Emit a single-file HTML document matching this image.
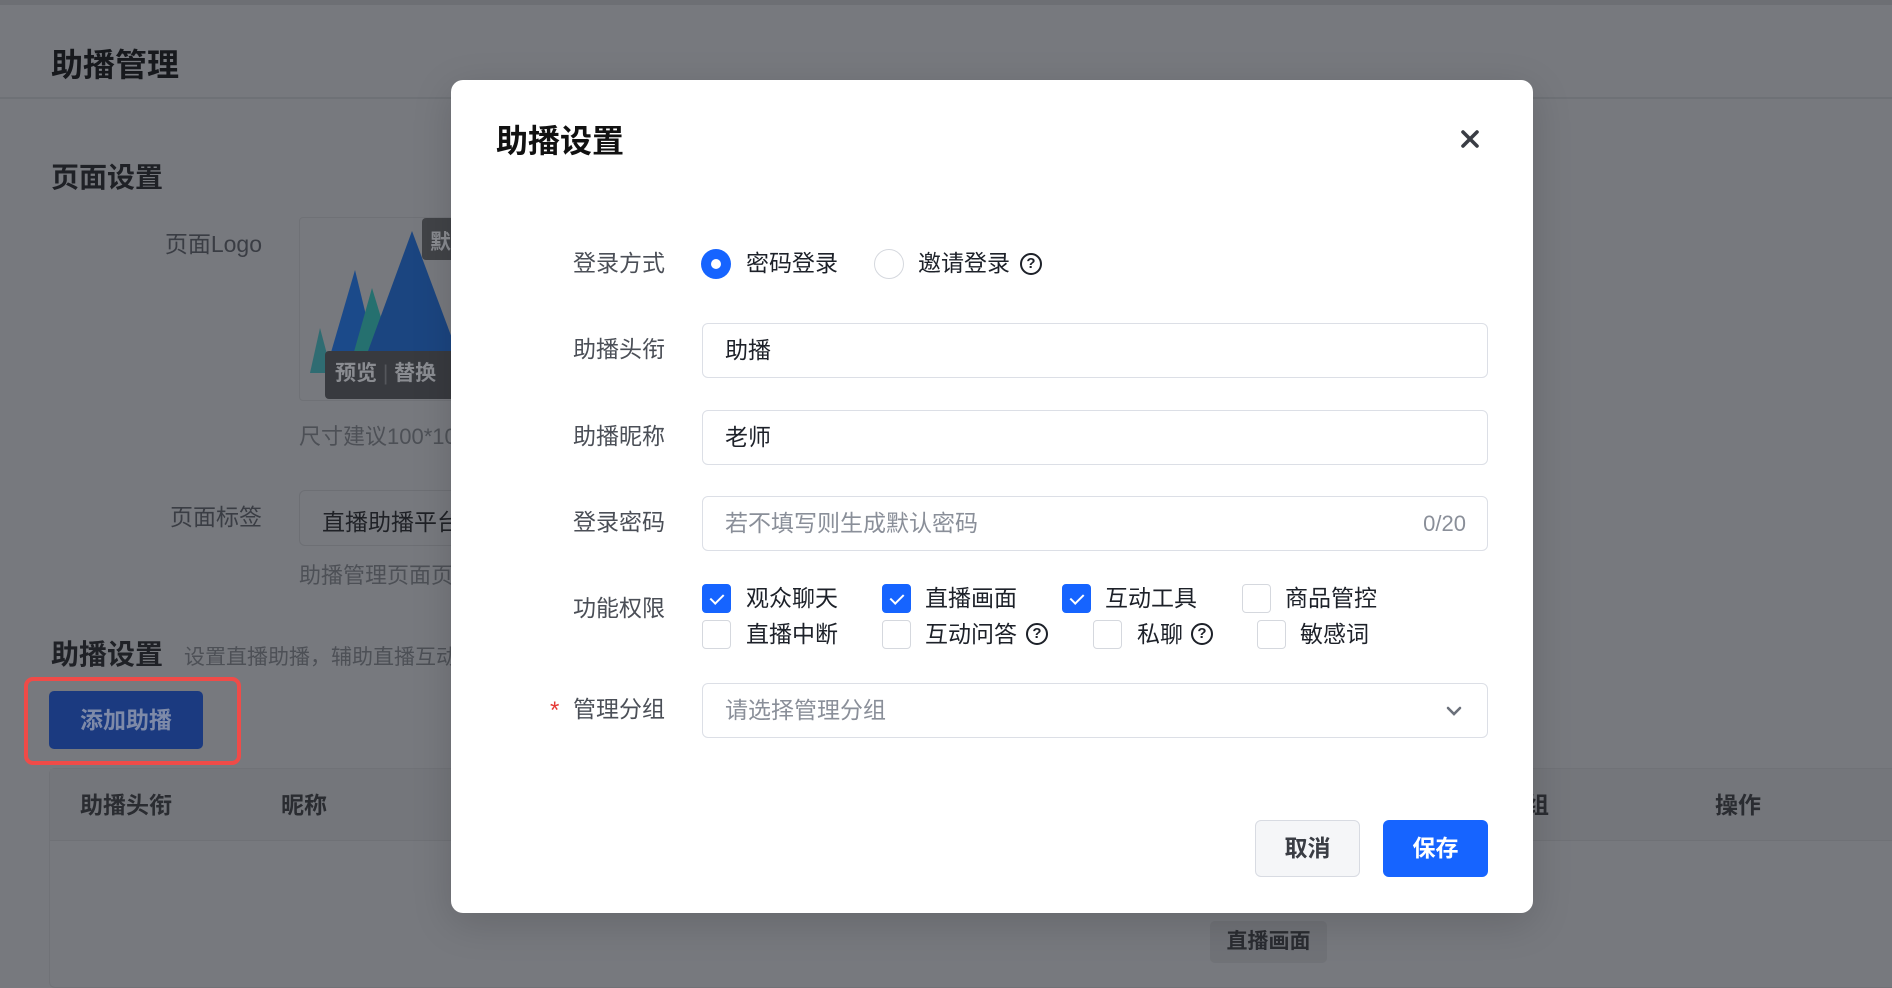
<!DOCTYPE html>
<html><head><meta charset="utf-8"><style>
*{box-sizing:border-box;margin:0;padding:0}
body{width:1892px;height:968px;overflow:hidden;background:#77797e;font-family:"Liberation Sans","Noto Sans CJK SC",sans-serif;position:relative;color:#1f2126}
.a{position:absolute;white-space:nowrap}
.lbl{font-size:23px;color:#3a3d44;line-height:1}
.m{position:absolute;left:451px;top:80px;width:1082px;height:833px;background:#fff;border-radius:12px;box-shadow:0 10px 40px rgba(0,0,0,.15)}
.ml{position:absolute;right:1227px;font-size:23px;color:#4b4f57;line-height:1;white-space:nowrap}
.inp{position:absolute;left:702px;width:786px;height:55px;border:1px solid #dcdfe6;border-radius:6px;font-size:23px;color:#1d2129;padding-left:22px;line-height:53px}
.cb{position:absolute;width:29px;height:29px;border:1px solid #d5d8de;border-radius:4px;background:#fff}
.cb.on{background:#1664ff;border-color:#1664ff}
.cb.on::after{content:"";position:absolute;left:10px;top:6px;width:6px;height:11px;border:solid #fff;border-width:0 2px 2px 0;transform:rotate(45deg)}
.ct{position:absolute;font-size:23px;color:#1d2129;line-height:1;white-space:nowrap}
.q{position:absolute;width:22px;height:22px;border:2px solid #1d2129;border-radius:50%;font-size:15px;line-height:18px;text-align:center;font-weight:bold;color:#1d2129}
</style></head><body>
<div class="a" style="left:0;top:0;width:1892px;height:5px;background:#6d6f74"></div>
<div class="a" style="left:0;top:97px;width:1892px;height:2px;background:#6e7176"></div>
<div class="a" style="left:51px;top:40px;font-size:32px;font-weight:bold;color:#17191d">助播管理</div>
<div class="a" style="left:51px;top:156px;font-size:28px;font-weight:bold;color:#1f2126">页面设置</div>
<div class="a lbl" style="right:1630px;top:233px">页面Logo</div>
<div class="a" style="left:299px;top:217px;width:190px;height:184px;border:1px solid #6f7176;border-radius:4px;overflow:hidden">
<svg width="190" height="184" style="position:absolute;left:0;top:0">
<polygon points="10,155 20,110 32,155" fill="#2f6c72"/>
<polygon points="25,155 55,52 80,155" fill="#1b4a8a"/>
<polygon points="48,155 72,70 98,155" fill="#25706f"/>
<polygon points="60,155 112,13 165,155" fill="#1b4580"/>
</svg>
<div class="a" style="left:25px;top:133px;width:170px;height:48px;background:#383a3f;border-radius:4px;color:#8a8c91;font-size:21px;font-weight:bold;line-height:46px;padding-left:10px">预览 <span style="color:#55575c;font-weight:normal">|</span> 替换</div>
<div class="a" style="left:122px;top:0;width:60px;height:42px;background:#414347;border-radius:4px;color:#8a8c91;font-size:21px;font-weight:bold;padding:8px">默认</div>
</div>
<div class="a" style="left:299px;top:419px;font-size:22px;color:#4d5056">尺寸建议100*100</div>
<div class="a lbl" style="right:1630px;top:506px">页面标签</div>
<div class="a" style="left:299px;top:490px;width:200px;height:56px;border:1px solid #6d6f74;border-radius:6px;font-size:23px;color:#1f2126;padding:12px 22px">直播助播平台</div>
<div class="a" style="left:299px;top:558px;font-size:22px;color:#4d5056">助播管理页面页面标签</div>
<div class="a" style="left:51px;top:633px;font-size:28px;font-weight:bold;color:#1f2126">助播设置</div>
<div class="a" style="left:184px;top:641px;font-size:21px;color:#4d5056">设置直播助播，辅助直播互动</div>
<div class="a" style="left:24px;top:677px;width:217px;height:88px;border:4px solid #f04b48;border-radius:9px"></div>
<div class="a" style="left:49px;top:691px;width:154px;height:58px;background:#1b3a80;border-radius:5px;color:#7e8aa8;font-size:23px;font-weight:bold;text-align:center;line-height:58px">添加助播</div>
<div class="a" style="left:49px;top:768px;width:1860px;height:220px;border:1px solid #707277;border-radius:6px"></div>
<div class="a" style="left:50px;top:769px;width:1850px;height:72px;background:#74767b;border-bottom:1px solid #6f7176"></div>
<div class="a" style="left:80px;top:786px;font-size:23px;font-weight:bold;color:#2a2c31">助播头衔</div>
<div class="a" style="left:281px;top:786px;font-size:23px;font-weight:bold;color:#2a2c31">昵称</div>
<div class="a" style="left:1503px;top:786px;font-size:23px;font-weight:bold;color:#2a2c31">分组</div>
<div class="a" style="left:1715px;top:786px;font-size:23px;font-weight:bold;color:#2a2c31">操作</div>
<div class="a" style="left:1210px;top:921px;width:117px;height:42px;background:#707277;border-radius:5px;font-size:21px;font-weight:bold;color:#2a2c31;text-align:center;line-height:42px">直播画面</div>

<div class="m"></div>
<div class="a" style="left:496px;top:116px;font-size:32px;font-weight:bold;color:#111">助播设置</div>
<svg class="a" style="left:1461px;top:130px" width="18" height="18"><path d="M2 2L16 16M16 2L2 16" stroke="#3a3d44" stroke-width="3.6" stroke-linecap="round"/></svg>

<div class="ml" style="top:252px">登录方式</div>
<div class="a" style="left:701px;top:249px;width:30px;height:30px;border-radius:50%;background:#1664ff"></div>
<div class="a" style="left:711px;top:259px;width:10px;height:10px;border-radius:50%;background:#fff"></div>
<div class="ct" style="left:746px;top:252px">密码登录</div>
<div class="a" style="left:874px;top:249px;width:30px;height:30px;border-radius:50%;border:1px solid #d5d8de"></div>
<div class="ct" style="left:918px;top:252px">邀请登录</div>
<div class="q" style="left:1020px;top:253px">?</div>

<div class="ml" style="top:338px">助播头衔</div>
<div class="inp" style="top:323px">助播</div>
<div class="ml" style="top:425px">助播昵称</div>
<div class="inp" style="top:410px">老师</div>
<div class="ml" style="top:511px">登录密码</div>
<div class="inp" style="top:496px;color:#8a8f99">若不填写则生成默认密码<span style="position:absolute;right:21px;top:0;font-size:22px">0/20</span></div>

<div class="ml" style="top:597px">功能权限</div>
<div class="cb on" style="left:702px;top:584px"></div><div class="ct" style="left:746px;top:587px">观众聊天</div>
<div class="cb on" style="left:882px;top:584px"></div><div class="ct" style="left:925px;top:587px">直播画面</div>
<div class="cb on" style="left:1062px;top:584px"></div><div class="ct" style="left:1105px;top:587px">互动工具</div>
<div class="cb" style="left:1242px;top:584px"></div><div class="ct" style="left:1285px;top:587px">商品管控</div>
<div class="cb" style="left:702px;top:620px"></div><div class="ct" style="left:746px;top:623px">直播中断</div>
<div class="cb" style="left:882px;top:620px"></div><div class="ct" style="left:925px;top:623px">互动问答</div><div class="q" style="left:1026px;top:623px">?</div>
<div class="cb" style="left:1093px;top:620px"></div><div class="ct" style="left:1137px;top:623px">私聊</div><div class="q" style="left:1191px;top:623px">?</div>
<div class="cb" style="left:1257px;top:620px"></div><div class="ct" style="left:1300px;top:623px">敏感词</div>

<div class="a" style="left:550px;top:697px;font-size:24px;color:#e53935">*</div>
<div class="ml" style="top:698px">管理分组</div>
<div class="inp" style="top:683px;color:#8a8f99">请选择管理分组</div>
<svg class="a" style="left:1446px;top:705px" width="16" height="12"><path d="M2 3L8 9L14 3" stroke="#6b707a" stroke-width="2.6" fill="none" stroke-linecap="round"/></svg>

<div class="a" style="left:1255px;top:820px;width:105px;height:57px;background:#f5f6f8;border:1px solid #d8dbe2;border-radius:6px;font-size:23px;font-weight:bold;color:#3a3d44;text-align:center;line-height:55px">取消</div>
<div class="a" style="left:1383px;top:820px;width:105px;height:57px;background:#1664ff;border-radius:6px;font-size:23px;font-weight:bold;color:#fff;text-align:center;line-height:57px">保存</div>
</body></html>
